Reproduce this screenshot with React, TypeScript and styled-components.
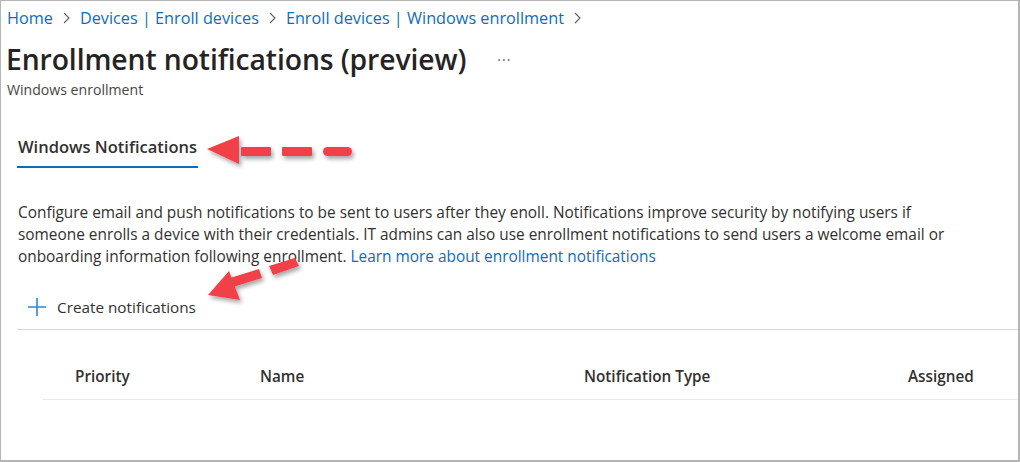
import React from "react";
import styled, { createGlobalStyle } from "styled-components";

const GlobalStyle = createGlobalStyle`
  html, body { margin: 0; padding: 0; background: #ffffff; }
  body { font-family: "Open Sans", "Noto Sans", sans-serif; color: #323130; }
  * { box-sizing: border-box; }
`;

const Frame = styled.div`
  position: relative;
  width: 1020px;
  height: 462px;
  border-top: 1px solid #b5b5b5;
  border-left: 1px solid #b5b5b5;
  border-right: 2px solid #b5b5b5;
  border-bottom: 2px solid #b5b5b5;
  overflow: hidden;
  background: #fff;
`;

const Breadcrumb = styled.nav`
  display: flex;
  align-items: center;
  gap: 9px;
  height: 34px;
  padding: 0 0 0 6px;
  font-size: 16.25px;
`;

const Crumb = styled.a`
  color: #0f6cbd;
  text-decoration: none;
  white-space: nowrap;
`;

const Chevron = styled.svg`
  width: 9px;
  height: 12px;
  flex: none;
`;

const TitleRow = styled.div`
  display: flex;
  align-items: center;
  height: 46px;
  padding-left: 5px;
  margin-top: 1px;
`;

const Title = styled.h1`
  margin: 0;
  font-size: 28.3px;
  font-weight: 600;
  color: #252423;
  letter-spacing: -0.1px;
  white-space: nowrap;
`;

const More = styled.span`
  margin-left: 31px;
  font-size: 14px;
  color: #605e5c;
  letter-spacing: 1px;
  line-height: 1;
  padding-top: 2px;
`;

const Subtitle = styled.div`
  padding-left: 6px;
  font-size: 14.1px;
  color: #484644;
  line-height: 16px;
`;

const Tabs = styled.div`
  display: flex;
  padding: 39px 0 0 16px;
`;

const Tab = styled.div`
  font-size: 16.5px;
  font-weight: 600;
  color: #323130;
  padding: 0 1px 9px 1px;
  border-bottom: 2px solid #0f6cbd;
  line-height: 20px;
`;

const Description = styled.p`
  margin: 34px 0 0 17px;
  font-size: 15.4px;
  line-height: 22px;
  color: #323130;
  white-space: nowrap;
`;

const Link = styled.a`
  color: #0f6cbd;
  text-decoration: none;
`;

const CommandBar = styled.div`
  display: flex;
  align-items: center;
  gap: 10px;
  height: 40px;
  margin: 19px 0 0 26px;
  font-size: 15.3px;
  color: #323130;
`;

const Divider = styled.div`
  height: 1px;
  background: #d6d6d6;
  margin: 2px 0 0 16px;
`;

const TableHead = styled.div`
  display: grid;
  grid-template-columns: 185px 324px 324px 1fr;
  align-items: center;
  height: 70px;
  margin: 0 0 0 42px;
  padding: 22px 0 0 32px;
  border-bottom: 1px solid #e8e8e8;
`;

const HeadCell = styled.div`
  font-size: 15.3px;
  font-weight: 600;
  color: #323130;
`;

const Overlay = styled.svg`
  position: absolute;
  left: 0;
  top: 0;
  width: 1020px;
  height: 462px;
  pointer-events: none;
`;

const ChevronIcon = () => (
  <Chevron viewBox="0 0 9 12">
    <path d="M2 1 L7 6 L2 11" fill="none" stroke="#605e5c" strokeWidth="1.1" />
  </Chevron>
);

export default function App() {
  const red = "#f2404a";
  return (
    <>
      <GlobalStyle />
      <Frame>
        <Breadcrumb>
          <Crumb>Home</Crumb>
          <ChevronIcon />
          <Crumb>Devices | Enroll devices</Crumb>
          <ChevronIcon />
          <Crumb>Enroll devices | Windows enrollment</Crumb>
          <ChevronIcon />
        </Breadcrumb>
        <TitleRow>
          <Title>Enrollment notifications (preview)</Title>
          <More>···</More>
        </TitleRow>
        <Subtitle>Windows enrollment</Subtitle>
        <Tabs>
          <Tab>Windows Notifications</Tab>
        </Tabs>
        <Description>
          Configure email and push notifications to be sent to users after they enoll. Notifications improve security by notifying users if
          <br />
          someone enrolls a device with their credentials. IT admins can also use enrollment notifications to send users a welcome email or
          <br />
          onboarding information following enrollment. <Link>Learn more about enrollment notifications</Link>
        </Description>
        <CommandBar>
          <svg width="20" height="20" viewBox="0 0 20 20">
            <path d="M10 1 V19 M1 10 H19" stroke="#2b88d8" strokeWidth="1.6" fill="none" />
          </svg>
          <span>Create notifications</span>
        </CommandBar>
        <Divider />
        <TableHead>
          <HeadCell>Priority</HeadCell>
          <HeadCell>Name</HeadCell>
          <HeadCell>Notification Type</HeadCell>
          <HeadCell>Assigned</HeadCell>
        </TableHead>
        <Overlay viewBox="0 0 1020 462">
          <defs>
            <filter id="sh" x="-20%" y="-50%" width="140%" height="200%">
              <feDropShadow dx="2" dy="3" stdDeviation="2" floodColor="#000" floodOpacity="0.35" />
            </filter>
          </defs>
          <g filter="url(#sh)" fill={red}>
            <polygon points="206,148 238,135 238,163" />
            <rect x="240" y="146" width="30" height="9" rx="1" />
            <rect x="281" y="146" width="30" height="9" rx="1" />
            <rect x="322" y="146" width="29" height="9" rx="4.5" />
          </g>
          <g filter="url(#sh)" fill={red}>
            <polygon points="207,294 228,270 239,299" />
            <polygon points="229,277 258,268 261,277 232,286" />
            <polygon points="268,265 294,257 298,265 272,274" />
          </g>
        </Overlay>
      </Frame>
    </>
  );
}
